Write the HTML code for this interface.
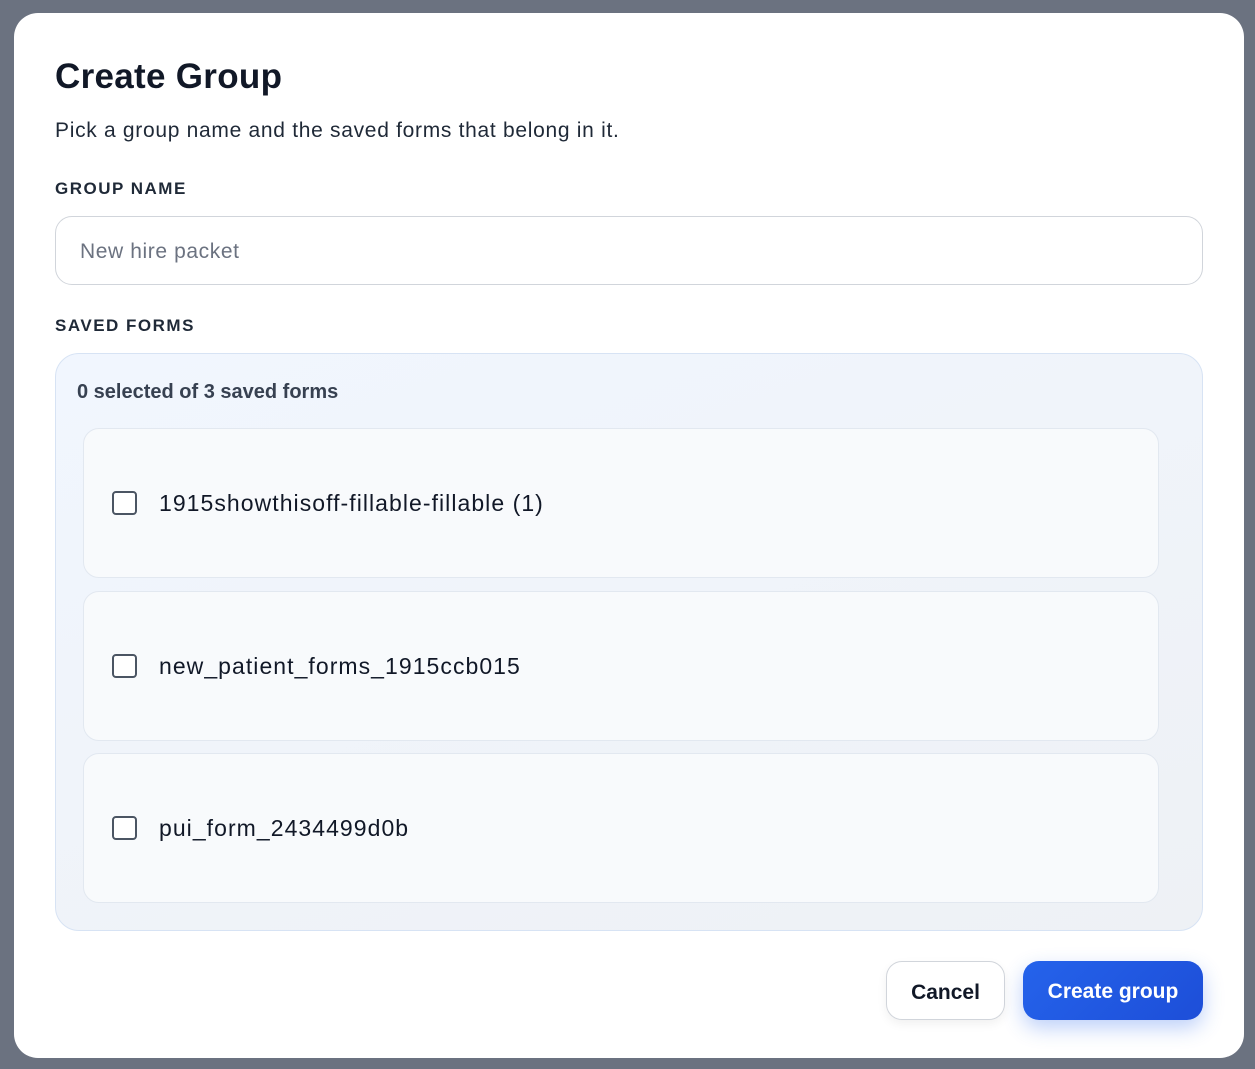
<!DOCTYPE html>
<html><head><meta charset="utf-8"><style>
*{box-sizing:border-box;margin:0;padding:0}
body{width:1255px;height:1069px;background:#6b7280;font-family:"Liberation Sans",sans-serif;position:relative;overflow:hidden}
.modal{position:absolute;left:14px;top:13px;width:1230px;height:1045px;background:#fff;border-radius:24px}
.abs{position:absolute}
h1{position:absolute;left:41px;top:44px;font-size:35px;font-weight:700;color:#111827;letter-spacing:0.3px}
.sub{left:41px;top:106px;font-size:21px;color:#1f2937;letter-spacing:0.7px}
.lab{font-size:17px;font-weight:700;color:#1f2937;letter-spacing:1.5px}
.input{left:41px;top:203px;width:1148px;height:69px;border:1px solid #d1d5db;border-radius:17px;font-size:21px;color:#6b7280;padding:23px 0 0 24px;letter-spacing:0.6px}
.panel{left:41px;top:340px;width:1148px;height:578px;border:1px solid #d7e3f4;border-radius:24px;background:linear-gradient(160deg,#f1f6fe,#eef1f5)}
.cnt{left:21px;top:27px;font-size:20px;font-weight:700;color:#374151;letter-spacing:0px}
.item{position:absolute;left:27px;width:1076px;height:150px;background:#f8fafc;border:1px solid #e2e8f0;border-radius:16px}
.cb{position:absolute;left:28px;top:62px;width:25px;height:24px;border:2px solid #4b5563;border-radius:4px;background:#fff}
.it{position:absolute;left:75px;top:61px;font-size:23px;color:#111827;letter-spacing:1.05px}
.btn{top:948px;height:59px;border-radius:16px;font-size:21px;font-weight:700;text-align:center;line-height:61px}
</style></head><body>
<div class="modal">
<h1>Create Group</h1>
<div class="abs sub">Pick a group name and the saved forms that belong in it.</div>
<div class="abs lab" style="left:41px;top:166px">GROUP NAME</div>
<div class="abs input">New hire packet</div>
<div class="abs lab" style="left:41px;top:303px">SAVED FORMS</div>
<div class="abs panel">
<div class="abs cnt">0 selected of 3 saved forms</div>
<div class="item" style="top:74px"><div class="cb"></div><div class="it">1915showthisoff-fillable-fillable (1)</div></div>
<div class="item" style="top:237px"><div class="cb"></div><div class="it">new_patient_forms_1915ccb015</div></div>
<div class="item" style="top:399px"><div class="cb"></div><div class="it">pui_form_2434499d0b</div></div>
</div>
<div class="abs btn" style="left:872px;width:119px;border:1px solid #d1d5db;background:#fff;color:#111827;box-shadow:0 4px 10px rgba(0,0,0,0.06)">Cancel</div>
<div class="abs btn" style="left:1009px;width:180px;background:linear-gradient(135deg,#2563eb,#1d4ed8);color:#fff;box-shadow:0 8px 20px rgba(37,99,235,0.3)">Create group</div>
</div>
</body></html>
